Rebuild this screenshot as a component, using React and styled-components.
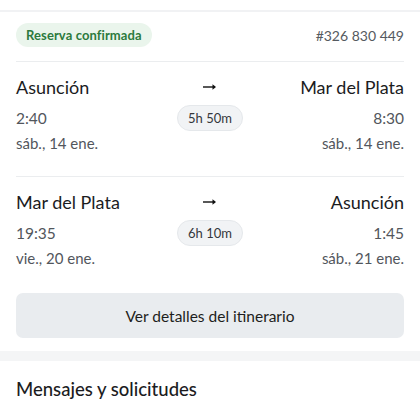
import React from "react";
import styled, { createGlobalStyle } from "styled-components";

const GlobalStyle = createGlobalStyle`
  body {
    margin: 0;
    background: #fff;
    font-family: "Lato", "Noto Sans", sans-serif;
    -webkit-font-smoothing: antialiased;
  }
`;

const trips = [
  {
    from: "Asunción",
    to: "Mar del Plata",
    depart: "2:40",
    arrive: "8:30",
    departDate: "sáb., 14 ene.",
    arriveDate: "sáb., 14 ene.",
    duration: "5h 50m",
  },
  {
    from: "Mar del Plata",
    to: "Asunción",
    depart: "19:35",
    arrive: "1:45",
    departDate: "vie., 20 ene.",
    arriveDate: "sáb., 21 ene.",
    duration: "6h 10m",
  },
];

const Arrow = () => (
  <svg width="14" height="8" viewBox="0 0 14 8">
    <path d="M0 4h12" stroke="#111" strokeWidth="1.4" />
    <path d="M9.5 1.2L13 4l-3.5 2.8z" fill="#111" />
  </svg>
);

const App = () => {
  return (
    <Page>
      <GlobalStyle />
      <TopEdge />
      <Card>
        <Header>
          <Status>Reserva confirmada</Status>
          <BookingId>#326 830 449</BookingId>
        </Header>
        {trips.map((t, i) => (
          <Segment key={i} last={i === trips.length - 1}>
            <City>{t.from}</City>
            <ArrowCell>
              <Arrow />
            </ArrowCell>
            <City align="right">{t.to}</City>
            <Time>{t.depart}</Time>
            <DurationCell>
              <Duration>{t.duration}</Duration>
            </DurationCell>
            <Time align="right">{t.arrive}</Time>
            <DateText>{t.departDate}</DateText>
            <span />
            <DateText align="right">{t.arriveDate}</DateText>
          </Segment>
        ))}
        <DetailsButton>Ver detalles del itinerario</DetailsButton>
      </Card>
      <Band />
      <SectionTitle>Mensajes y solicitudes</SectionTitle>
    </Page>
  );
};

export default App;

const Page = styled.div`
  width: 420px;
  min-height: 420px;
  background: #fff;
`;

const TopEdge = styled.div`
  height: 10px;
  border-bottom: 2px solid #f1f2f4;
`;

const Card = styled.div`
  padding: 0 16px 13px;
`;

const Header = styled.div`
  display: flex;
  align-items: center;
  justify-content: space-between;
  padding: 11px 0 14px;
  border-bottom: 1px solid #ebedef;
`;

const Status = styled.span`
  height: 24px;
  line-height: 24px;
  padding: 0 10px;
  border-radius: 12px;
  background: #eaf5ec;
  color: #2c7a3d;
  font-size: 13px;
  font-weight: 700;
  letter-spacing: 0.1px;
`;

const BookingId = styled.span`
  font-size: 14px;
  color: #555a60;
`;

const Segment = styled.div`
  display: grid;
  grid-template-columns: 1fr auto 1fr;
  grid-template-rows: 28px 27px 22px;
  align-items: center;
  padding: 14px 0 ${(p) => (p.last ? "25px" : "23px")};
  border-bottom: ${(p) => (p.last ? "none" : "1px solid #ebedef")};
`;

const City = styled.div`
  align-self: start;
  font-size: 18px;
  line-height: 22px;
  color: #1b1c1e;
  text-align: ${(p) => p.align || "left"};
  white-space: nowrap;
`;

const ArrowCell = styled.div`
  align-self: start;
  height: 22px;
  display: flex;
  align-items: center;
  justify-content: center;
`;

const DurationCell = styled.div`
  display: flex;
  justify-content: center;
`;

const Time = styled.div`
  font-size: 15.5px;
  line-height: 20px;
  color: #52565c;
  text-align: ${(p) => p.align || "left"};
`;

const DateText = styled.div`
  align-self: end;
  font-size: 15px;
  line-height: 20px;
  color: #52565c;
  text-align: ${(p) => p.align || "left"};
  white-space: nowrap;
`;

const Duration = styled.span`
  box-sizing: border-box;
  height: 26px;
  line-height: 24px;
  padding: 0 10px;
  border-radius: 13px;
  background: #f1f3f5;
  border: 1px solid #e5e8eb;
  font-size: 13px;
  color: #34373b;
`;

const DetailsButton = styled.button`
  display: block;
  width: 100%;
  height: 45px;
  border: none;
  border-radius: 7px;
  background: #e9ecef;
  font-family: inherit;
  font-size: 15.5px;
  color: #1d1e20;
  cursor: pointer;
`;

const Band = styled.div`
  height: 10px;
  background: #f4f5f6;
`;

const SectionTitle = styled.h2`
  margin: 0;
  padding: 16px 16px 0;
  font-size: 18.5px;
  font-weight: 500;
  line-height: 24px;
  color: #1b1c1e;
`;
